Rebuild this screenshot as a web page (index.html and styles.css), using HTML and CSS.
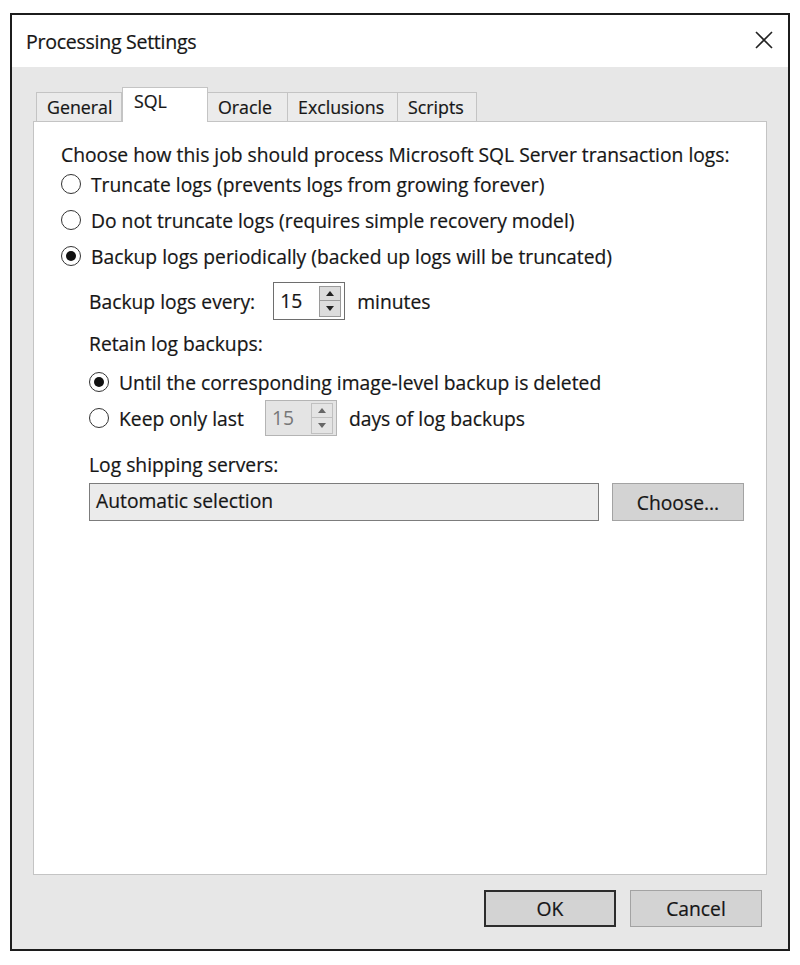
FILE: index.html
```html
<!DOCTYPE html>
<html lang="en">
<head>
  <meta charset="UTF-8" />
  <title>Processing Settings</title>
  <link rel="stylesheet" href="styles.css">
</head>
<body>

<div class="dialog">
  <div class="titlebar">
    <span class="title">Processing Settings</span>
    <svg class="close" width="18" height="18" viewBox="0 0 18 18">
      <path d="M1 1 L17 17 M17 1 L1 17" stroke="#222" stroke-width="1.6" fill="none"/>
    </svg>
  </div>

  <div class="dlg-body">
    <div class="tabs">
      <div class="tab">General</div>
      <div class="tab active">SQL</div>
      <div class="tab">Oracle</div>
      <div class="tab">Exclusions</div>
      <div class="tab">Scripts</div>
    </div>

    <div class="panel">
      <div class="line">Choose how this job should process Microsoft SQL Server transaction logs:</div>
      <div class="radio-row"><span class="radio"></span>Truncate logs (prevents logs from growing forever)</div>
      <div class="radio-row"><span class="radio"></span>Do not truncate logs (requires simple recovery model)</div>
      <div class="radio-row"><span class="radio checked"></span>Backup logs periodically (backed up logs will be truncated)</div>

      <div class="sub">
        <div class="spin-row">
          <span>Backup logs every:</span>
          <div class="spin">
            <span class="spin-val">15</span>
            <div class="spin-btns">
              <span class="spin-btn up"></span>
              <span class="spin-btn down"></span>
            </div>
          </div>
          <span>minutes</span>
        </div>

        <div class="line retain">Retain log backups:</div>
        <div class="radio-row"><span class="radio checked"></span>Until the corresponding image-level backup is deleted</div>
        <div class="radio-row">
          <span class="radio"></span>Keep only last
          <div class="spin disabled">
            <span class="spin-val">15</span>
            <div class="spin-btns">
              <span class="spin-btn up"></span>
              <span class="spin-btn down"></span>
            </div>
          </div>
          <span>days of log backups</span>
        </div>

        <div class="line shipping">Log shipping servers:</div>
        <div class="field-row">
          <div class="field">Automatic selection</div>
          <button class="btn choose">Choose...</button>
        </div>
      </div>
    </div>

    <div class="footer">
      <button class="btn default">OK</button>
      <button class="btn">Cancel</button>
    </div>
  </div>
</div>

</body>
</html>
```

FILE: styles.css
```css
* { box-sizing: border-box; }
body {
  margin: 0;
  background: #fff;
  font-family: 'Open Sans', 'Noto Sans', sans-serif;
  color: #161616;
  -webkit-text-stroke: 0.2px #161616;
}
.dialog {
  margin: 13px 0 0 10px;
  width: 780px;
  height: 938px;
  border: 2px solid #1c1c1c;
  display: flex;
  flex-direction: column;
}
.titlebar {
  height: 52px;
  background: #fff;
  display: flex;
  align-items: center;
  justify-content: space-between;
  padding: 0 15px 0 14px;
}
.title {
  font-size: 19.6px;
  letter-spacing: -0.3px;
}
.close { margin-top: -2px; }
.dlg-body {
  flex: 1;
  background: #e7e7e7;
  padding: 20px 21px 0 21px;
  display: flex;
  flex-direction: column;
}
.tabs {
  height: 34px;
  display: flex;
  align-items: flex-end;
  padding-left: 3px;
}
.tab {
  height: 29px;
  border: 1px solid #c4c4c4;
  border-bottom: none;
  background: #ebebeb;
  font-size: 17.8px;
  padding: 0 0 0 10px;
  line-height: 29px;
  white-space: nowrap;
}
.tab:nth-child(1) { width: 86px; }
.tab:nth-child(2) { width: 86px; }
.tab:nth-child(3) { width: 80px; }
.tab:nth-child(4) { width: 110px; }
.tab:nth-child(5) { width: 79px; }
.tab + .tab { border-left: none; }
.tab.active {
  height: 35px;
  margin-bottom: -1px;
  background: #fff;
  border-left: 1px solid #c4c4c4;
  line-height: 26px;
  padding-left: 11px;
  position: relative;
}
.panel {
  height: 754px;
  background: #fff;
  border: 1px solid #c4c4c4;
  padding: 22px 0 0 27px;
  font-size: 19.3px;
}
.line {
  height: 22px;
  line-height: 22px;
  white-space: nowrap;
}
.radio-row {
  height: 36px;
  display: flex;
  align-items: center;
  white-space: nowrap;
}
.radio {
  width: 20px;
  height: 20px;
  border: 1.6px solid #333;
  border-radius: 50%;
  margin-right: 10px;
  display: flex;
  align-items: center;
  justify-content: center;
  flex: none;
}
.radio.checked::after {
  content: "";
  width: 10px;
  height: 10px;
  border-radius: 50%;
  background: #111;
}
.sub { padding-left: 28px; }
.spin-row {
  margin-top: 8px;
  height: 38px;
  display: flex;
  align-items: center;
  white-space: nowrap;
}
.spin-row .spin { margin: 0 12px 0 18px; }
.spin {
  width: 72px;
  height: 38px;
  border: 1px solid #6e6e6e;
  background: #fff;
  display: flex;
  align-items: center;
  justify-content: space-between;
  padding: 0 3px 0 6px;
}
.spin.disabled {
  height: 36px;
  border-color: #b4b4b4;
  background: #e4e4e4;
  color: #777;
  -webkit-text-stroke: 0;
  margin: 0 12px 0 21px;
}
.spin-val { margin-top: -2px; }
.spin-btns {
  width: 22px;
  display: flex;
  flex-direction: column;
}
.spin-btn {
  height: 15.5px;
  background: #dcdcdc;
  border: 1px solid #9a9a9a;
  display: flex;
  align-items: center;
  justify-content: center;
}
.spin-btn + .spin-btn { border-top: none; }
.spin.disabled .spin-btn {
  background: #e4e4e4;
  border-color: #c0c0c0;
}
.spin-btn::after {
  content: "";
  border-left: 4px solid transparent;
  border-right: 4px solid transparent;
}
.spin-btn.up::after { border-bottom: 5px solid #222; }
.spin-btn.down::after { border-top: 5px solid #222; }
.spin.disabled .spin-btn.up::after { border-bottom-color: #666; }
.spin.disabled .spin-btn.down::after { border-top-color: #666; }
.line.retain { margin-top: 13px; }
.retain + .radio-row { margin-top: 9px; }
.line.shipping { margin-top: 18px; }
.field-row {
  margin-top: 7px;
  display: flex;
  gap: 13px;
}
.field {
  width: 510px;
  height: 38px;
  background: #ebebeb;
  border: 1px solid #7c7c7c;
  padding: 0 6px;
  line-height: 33px;
  white-space: nowrap;
}
.btn {
  font-family: 'Open Sans', 'Noto Sans', sans-serif;
  font-size: 19.3px;
  color: #161616;
  -webkit-text-stroke: 0.2px #161616;
  background: #d3d3d3;
  border: 1px solid #a3a3a3;
  height: 38px;
  width: 132px;
  padding: 0;
}
.footer {
  display: flex;
  justify-content: flex-end;
  gap: 14px;
  padding: 15px 5px 0 0;
}
.footer .btn { height: 37px; }
.btn.default { border: 2px solid #2c2c2c; }
```
